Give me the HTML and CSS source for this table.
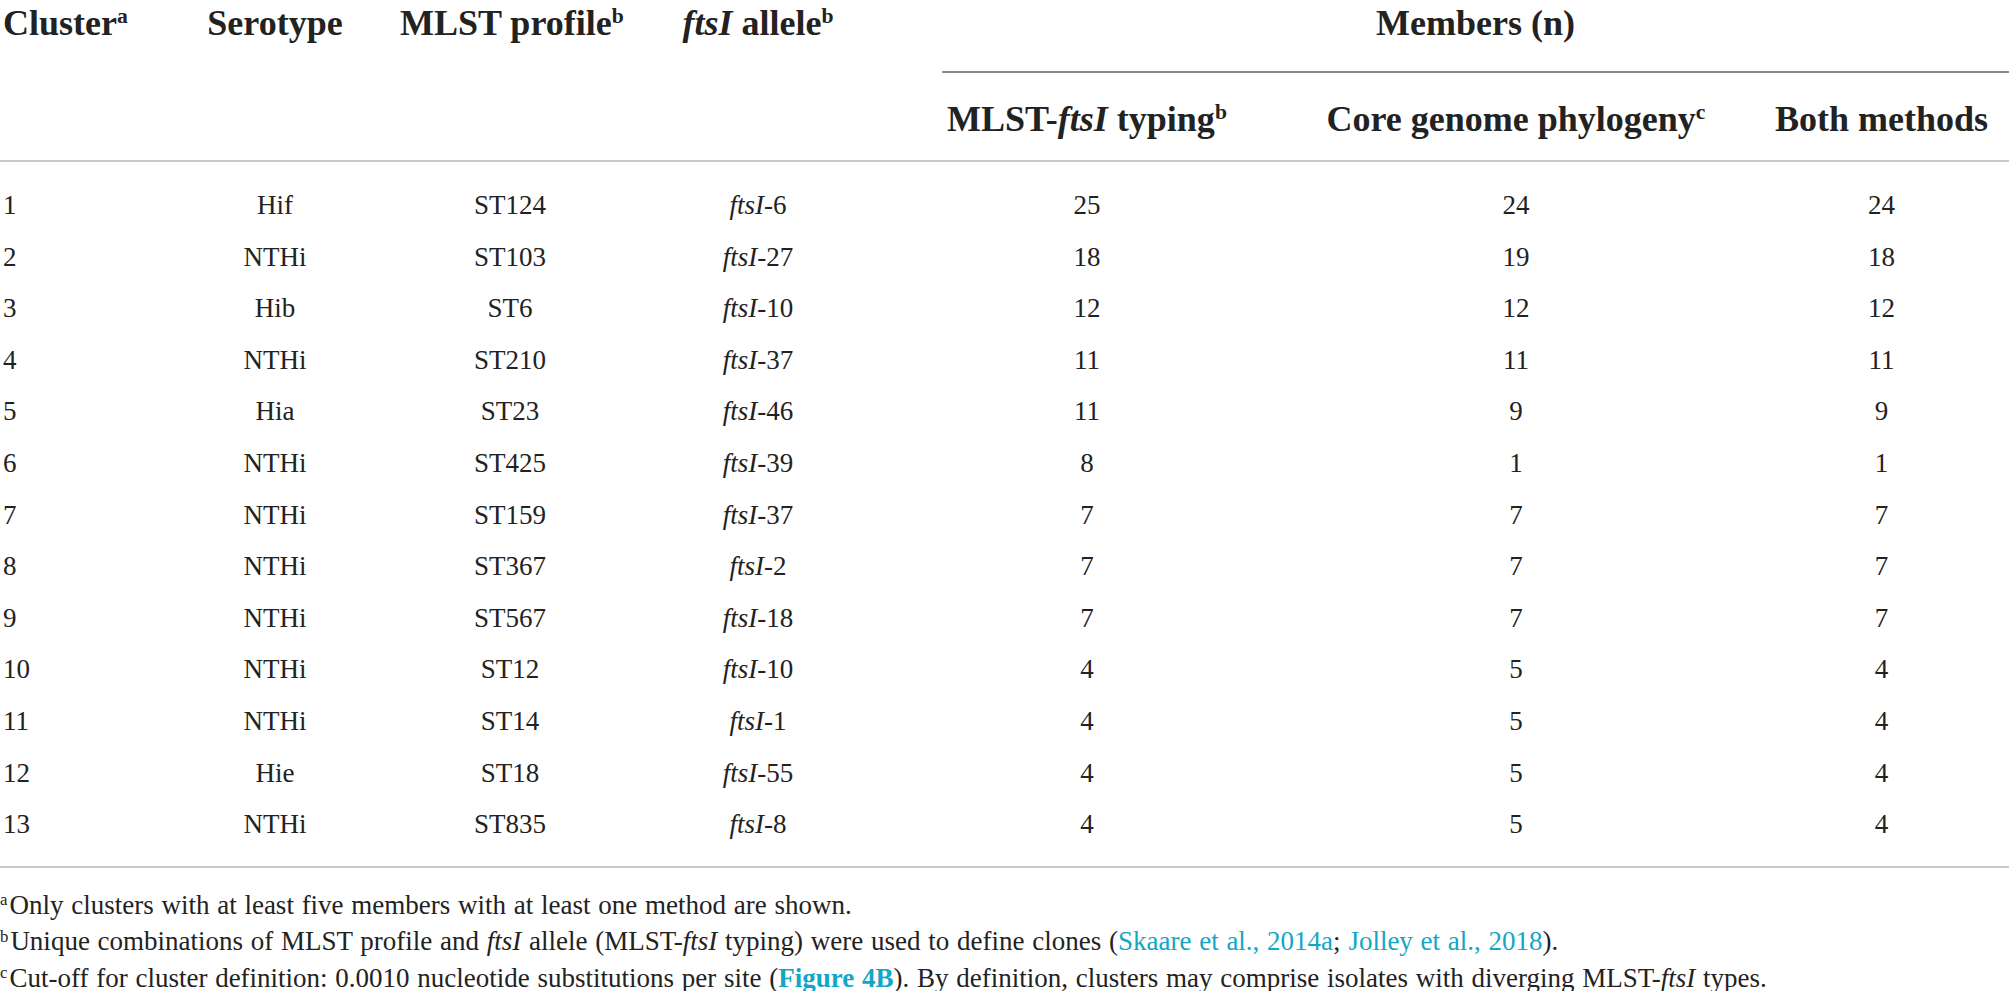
FILE: index.html
```html
<!DOCTYPE html>
<html lang="en">
<head>
  <meta charset="UTF-8" />
  <meta name="viewport" content="width=device-width, initial-scale=1.0" />
  <title>Table - Clusters</title>
  <link rel="stylesheet" href="styles.css">
</head>
<body>
  <table class="clusters">
    <colgroup>
      <col class="col-cluster">
      <col class="col-sero">
      <col class="col-mlst">
      <col class="col-fts">
      <col class="col-typing">
      <col class="col-core">
      <col class="col-both">
    </colgroup>
    <thead>
      <tr class="head-top">
        <th class="left tall" rowspan="2">Cluster<sup>a</sup></th>
        <th class="tall" rowspan="2">Serotype</th>
        <th class="tall" rowspan="2">MLST profile<sup>b</sup></th>
        <th class="tall" rowspan="2"><i>ftsI</i> allele<sup>b</sup></th>
        <th class="group" colspan="3"><div class="group-label">Members (n)</div></th>
      </tr>
      <tr class="head-sub">
        <th>MLST-<i>ftsI</i> typing<sup>b</sup></th>
        <th>Core genome phylogeny<sup>c</sup></th>
        <th>Both methods</th>
      </tr>
    </thead>
    <tbody>
      <tr><td class="left">1</td><td>Hif</td><td>ST124</td><td><i>ftsI</i>-6</td><td>25</td><td>24</td><td>24</td></tr>
      <tr><td class="left">2</td><td>NTHi</td><td>ST103</td><td><i>ftsI</i>-27</td><td>18</td><td>19</td><td>18</td></tr>
      <tr><td class="left">3</td><td>Hib</td><td>ST6</td><td><i>ftsI</i>-10</td><td>12</td><td>12</td><td>12</td></tr>
      <tr><td class="left">4</td><td>NTHi</td><td>ST210</td><td><i>ftsI</i>-37</td><td>11</td><td>11</td><td>11</td></tr>
      <tr><td class="left">5</td><td>Hia</td><td>ST23</td><td><i>ftsI</i>-46</td><td>11</td><td>9</td><td>9</td></tr>
      <tr><td class="left">6</td><td>NTHi</td><td>ST425</td><td><i>ftsI</i>-39</td><td>8</td><td>1</td><td>1</td></tr>
      <tr><td class="left">7</td><td>NTHi</td><td>ST159</td><td><i>ftsI</i>-37</td><td>7</td><td>7</td><td>7</td></tr>
      <tr><td class="left">8</td><td>NTHi</td><td>ST367</td><td><i>ftsI</i>-2</td><td>7</td><td>7</td><td>7</td></tr>
      <tr><td class="left">9</td><td>NTHi</td><td>ST567</td><td><i>ftsI</i>-18</td><td>7</td><td>7</td><td>7</td></tr>
      <tr><td class="left">10</td><td>NTHi</td><td>ST12</td><td><i>ftsI</i>-10</td><td>4</td><td>5</td><td>4</td></tr>
      <tr><td class="left">11</td><td>NTHi</td><td>ST14</td><td><i>ftsI</i>-1</td><td>4</td><td>5</td><td>4</td></tr>
      <tr><td class="left">12</td><td>Hie</td><td>ST18</td><td><i>ftsI</i>-55</td><td>4</td><td>5</td><td>4</td></tr>
      <tr><td class="left">13</td><td>NTHi</td><td>ST835</td><td><i>ftsI</i>-8</td><td>4</td><td>5</td><td>4</td></tr>
    </tbody>
  </table>

  <!-- Fussnoten -->
  <div class="notes">
    <p><sup>a</sup>Only clusters with at least five members with at least one method are shown.</p>
    <p><sup>b</sup>Unique combinations of MLST profile and <i>ftsI</i> allele (MLST-<i>ftsI</i> typing) were used to define clones (<a href="#">Skaare et al., 2014a</a>; <a href="#">Jolley et al., 2018</a>).</p>
    <p><sup>c</sup>Cut-off for cluster definition: 0.0010 nucleotide substitutions per site (<a href="#" class="fig">Figure 4B</a>). By definition, clusters may comprise isolates with diverging MLST-<i>ftsI</i> types.</p>
  </div>
</body>
</html>
```

FILE: styles.css
```css
body {
  margin: 0;
  font-family: 'Liberation Serif', 'Times New Roman', serif;
  background: #fff;
  color: #222;
  overflow: hidden;
}
.clusters {
  width: 2009px;
  border-collapse: collapse;
  table-layout: fixed;
}
.col-cluster { width: 150px; }
.col-sero { width: 250px; }
.col-mlst { width: 220px; }
.col-fts { width: 276px; }
.col-typing { width: 382px; }
.col-core { width: 476px; }
.col-both { width: 255px; }

.clusters th {
  font-size: 36px;
  font-weight: bold;
  line-height: 46px;
  padding: 0;
  text-align: center;
  vertical-align: top;
  white-space: nowrap;
}
.clusters .left {
  text-align: left;
  padding-left: 3px;
}
.clusters th.tall,
.head-sub th {
  border-bottom: 2px solid #c8c8c8;
}
.head-sub th {
  padding-top: 23px;
  padding-bottom: 18px;
}
.clusters th.group {
  padding-left: 46px;
}
.group-label {
  padding-bottom: 25px;
  border-bottom: 2px solid #8a8a8a;
}
.clusters sup {
  font-size: 60%;
  line-height: 0;
  vertical-align: 0.55em;
}
.clusters td {
  font-size: 27px;
  line-height: 51.6px;
  padding: 0;
  text-align: center;
  white-space: nowrap;
}
.clusters tbody tr:first-child td {
  padding-top: 18px;
}
.clusters tbody tr:last-child td {
  padding-bottom: 15px;
  border-bottom: 2px solid #c8c8c8;
}
.notes {
  margin-top: 19px;
  font-size: 27px;
  line-height: 36.5px;
  white-space: nowrap;
  word-spacing: 1px;
}
.notes p {
  margin: 0;
}
.notes sup {
  font-size: 62%;
  line-height: 0;
  vertical-align: 0.5em;
  margin-right: 2px;
}
.notes a {
  color: #14a6c4;
  text-decoration: none;
}
.notes a.fig {
  font-weight: bold;
}
```
